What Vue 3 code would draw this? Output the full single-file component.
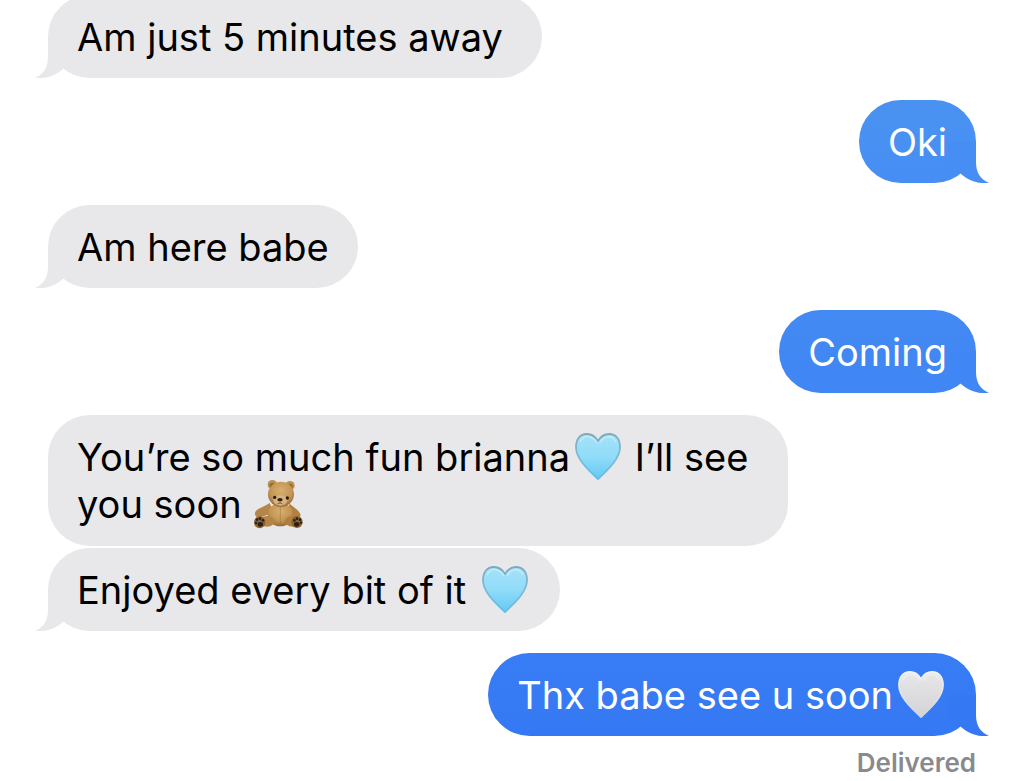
<script setup>
const messages = [
  { side: 'received', tone: 'gray', tail: true, parts: ['Am just 5 minutes away\u00a0'] },
  { side: 'sent', tone: 'sky', tail: true, parts: ['Oki'] },
  { side: 'received', tone: 'gray', tail: true, parts: ['Am here babe'] },
  { side: 'sent', tone: 'azure', tail: true, parts: ['Coming'] },
  {
    side: 'received',
    tone: 'gray',
    tail: false,
    parts: ['You’re so much fun brianna', { icon: 'blue' }, ' I’ll see ', 'you soon ', { icon: 'bear' }],
  },
  { side: 'received', tone: 'gray', tail: true, grouped: true, parts: ['Enjoyed every bit of it ', { icon: 'blue' }] },
  { side: 'sent', tone: 'royal', tail: true, parts: ['Thx babe see u soon', { icon: 'white' }] },
]
</script>

<template>
  <main class="thread">
    <svg class="defs" aria-hidden="true">
      <defs>
        <linearGradient id="blue-fill" x1="0" y1="0" x2="0" y2="1">
          <stop offset="0" stop-color="#a6e2f7" />
          <stop offset="0.5" stop-color="#91dcfa" />
          <stop offset="1" stop-color="#66c8f2" />
        </linearGradient>
        <linearGradient id="blue-edge" x1="0" y1="0" x2="0" y2="1">
          <stop offset="0" stop-color="#7fa9ba" />
          <stop offset="0.5" stop-color="#7ebbd3" />
          <stop offset="1" stop-color="#5fbfe9" />
        </linearGradient>
        <linearGradient id="white-fill" x1="0" y1="0" x2="0" y2="1">
          <stop offset="0" stop-color="#e8e8ea" />
          <stop offset="0.5" stop-color="#dddde0" />
          <stop offset="1" stop-color="#d3d4d8" />
        </linearGradient>
        <linearGradient id="white-edge" x1="0" y1="0" x2="0" y2="1">
          <stop offset="0" stop-color="#f2f3f5" />
          <stop offset="1" stop-color="#cfd3dc" />
        </linearGradient>
        <radialGradient id="fur" cx="0.5" cy="0.35" r="0.65">
          <stop offset="0" stop-color="#d8ae6e" />
          <stop offset="0.65" stop-color="#c39555" />
          <stop offset="1" stop-color="#966a37" />
        </radialGradient>
      </defs>
    </svg>

    <ul class="list">
      <li v-for="(m, i) in messages" :key="i" class="row" :class="[m.side, m.tone, { grouped: m.grouped }]">
        <div class="bubble">
          <svg v-if="m.tail" class="tail" viewBox="0 0 41 41" aria-hidden="true">
            <path d="M13 0V20C13 31 8 38 0 40.6C9 42.5 20 39 28 32L41 20V0Z" />
          </svg>
          <p class="text"><template v-for="(p, j) in m.parts" :key="j"><template v-if="typeof p === 'string'">{{ p }}</template><svg v-else-if="p.icon === 'bear'" class="bear" viewBox="26 20 150 150" role="img" aria-label="teddy bear">
              <path d="M76 92C60 104 36 108 32 121C30 134 42 139 53 133L88 121Z" fill="#b58647" />
              <path d="M136 94C148 104 168 117 169 129C168 138 155 138 143 131L126 118Z" fill="#b18141" />
              <circle cx="84" cy="37" r="14" fill="#bd8f50" /><circle cx="84" cy="39" r="8" fill="#946b38" />
              <circle cx="137" cy="40" r="14" fill="#bd8f50" /><circle cx="137" cy="42" r="8" fill="#946b38" />
              <ellipse cx="108" cy="127" rx="38" ry="35" fill="url(#fur)" />
              <path d="M108 104V157" stroke="#96703b" stroke-width="1.5" />
              <ellipse cx="68" cy="147" rx="24" ry="16" fill="#b48445" />
              <ellipse cx="145" cy="147" rx="24" ry="16" fill="#b07f3f" />
              <ellipse cx="110" cy="66" rx="39" ry="38" fill="url(#fur)" />
              <ellipse cx="108" cy="84" rx="21" ry="16" fill="#d8b47c" />
              <circle cx="91" cy="75" r="5" fill="#291b12" /><circle cx="129" cy="77" r="5" fill="#291b12" />
              <ellipse cx="107" cy="82" rx="8" ry="5" fill="#30211b" />
              <path d="M107 84V92M99 95Q107 88 115 95" fill="none" stroke="#5b3c21" stroke-width="2" />
              <ellipse cx="46" cy="150" rx="17" ry="18" fill="#8c6030" />
              <ellipse cx="158" cy="149" rx="17" ry="18" fill="#8c6030" />
              <g fill="#28201c">
                <ellipse cx="48" cy="156" rx="8" ry="7" /><circle cx="35" cy="152" r="3.5" /><circle cx="38" cy="142" r="4" /><circle cx="47" cy="139" r="4" /><circle cx="56" cy="144" r="4" />
                <ellipse cx="157" cy="156" rx="8" ry="7" /><circle cx="170" cy="151" r="3.5" /><circle cx="167" cy="142" r="4" /><circle cx="158" cy="139" r="4" /><circle cx="150" cy="144" r="4" />
              </g>
            </svg><svg v-else class="heart" viewBox="0 0 46 47" role="img" :aria-label="p.icon + ' heart'">
              <path
                d="M23 8C20 3 17 1 12 1C5 1 1 6 1 14C1 25 11 35 23 46C35 35 45 25 45 14C45 6 41 1 34 1C29 1 26 3 23 8Z"
                :fill="`url(#${p.icon}-fill)`" :stroke="`url(#${p.icon}-edge)`" stroke-width="1.8" stroke-linejoin="round"
              />
              <path class="shine" d="M5 9C7 5 9 3 13 3.500C17 4 20 6 22 10M25 10C28 4 32 3 36 4C39 5 40 7 41 9" />
            </svg></template></p>
        </div>
      </li>
    </ul>
    <p class="status">Delivered</p>
  </main>
</template>

<style>
body {
  margin: 0;
  background: #fff;
  overflow: hidden;
}
</style>

<style scoped>
.thread {
  margin-top: -5px;
  padding: 0 48px;
  font-family: Inter, "Liberation Sans", sans-serif;
}
.defs {
  position: absolute;
  width: 0;
  height: 0;
}
.list {
  display: flex;
  flex-direction: column;
  gap: 22px;
  margin: 0;
  padding: 0;
  list-style: none;
}
.row {
  display: flex;
}
.sent {
  justify-content: flex-end;
  color: #fff;
}
.received {
  color: #000;
}
.grouped {
  margin-top: -20px;
}
.gray {
  --fill: #e8e8ea;
  --base: #e8e8ea;
}
.sky {
  --fill: linear-gradient(#4a92f1, #468ef4);
  --base: #468ef4;
}
.azure {
  --fill: linear-gradient(#438af3, #4086f5);
  --base: #4086f5;
}
.royal {
  --fill: linear-gradient(#387df5, #3578f3);
  --base: #3578f3;
}
.bubble {
  position: relative;
  box-sizing: border-box;
  max-width: 740px;
  padding: 19px 29px 17px;
  border-radius: 42px;
  background: var(--fill);
}
.tail {
  position: absolute;
  bottom: 0;
  left: -13px;
  width: 41px;
  height: 41px;
  fill: var(--base);
}
.sent .tail {
  right: -13px;
  left: auto;
  transform: scaleX(-1);
}
.text {
  position: relative;
  margin: 0;
  font-size: 38px;
  line-height: 47px;
}
.heart {
  width: 46px;
  height: 47px;
  margin: -10px 3px 0 5px;
  vertical-align: -9px;
}
.shine {
  fill: none;
  stroke: #fff;
  stroke-width: 1.5;
  opacity: 0.35;
}
.bear {
  width: 50px;
  height: 50px;
  margin: -10px 1px 0;
  vertical-align: -11px;
}
.status {
  margin: 12px 0 0;
  color: #8a8a8e;
  font-size: 26px;
  font-weight: 600;
  line-height: 30px;
  text-align: right;
}
</style>
